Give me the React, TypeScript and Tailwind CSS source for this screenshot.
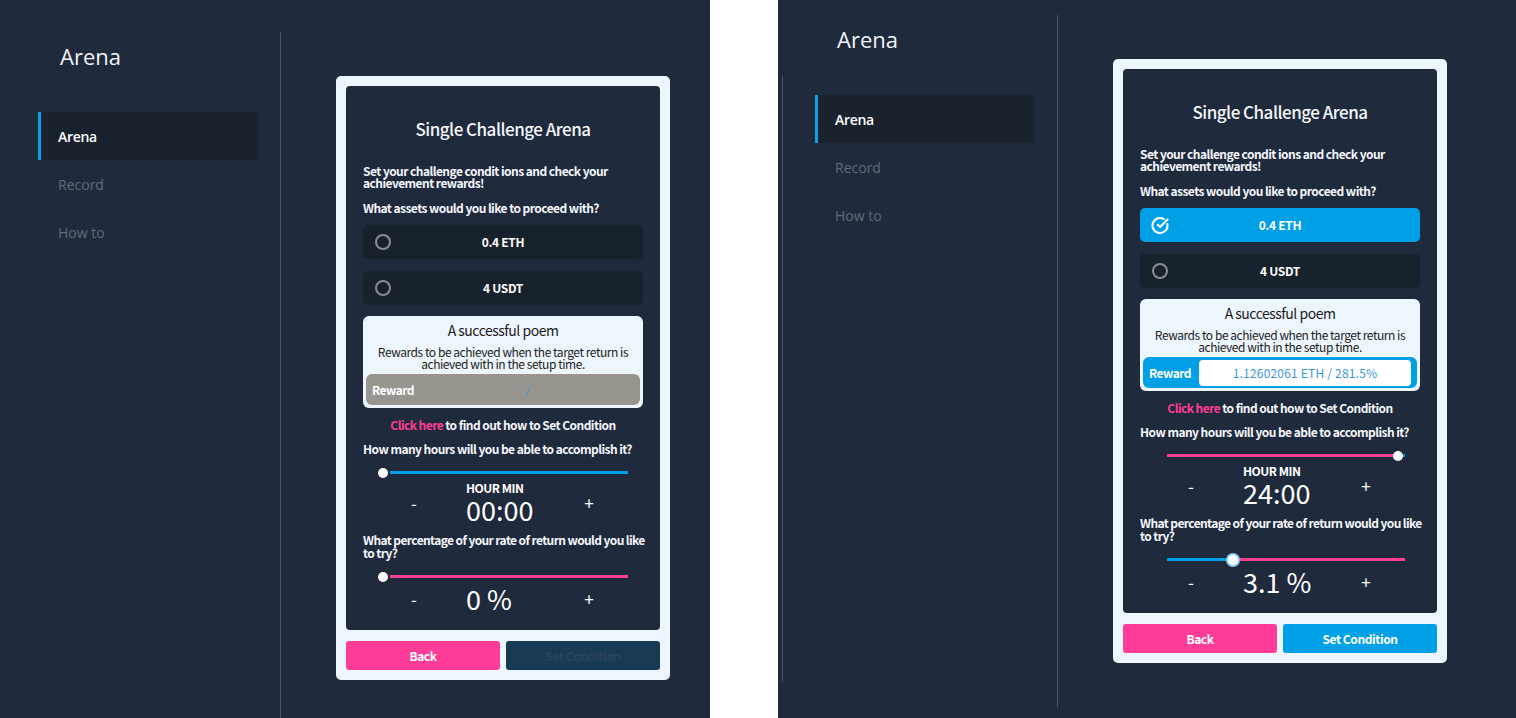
import React from 'react';
import { CircleCheckBig } from 'lucide-react';

const cardFont = { fontFamily: '"Noto Sans CJK KR", "Noto Sans", sans-serif' };

type PanelProps = {
  selected: boolean;
  timePct: number;
  time: string;
  ratePct: number;
  rate: string;
  reward: string;
  ready: boolean;
};

const Slider = ({ pct, fillClass, restClass, ring }: { pct: number; fillClass: string; restClass: string; ring?: boolean }) => {
  const fill = Math.max(0, pct * 238 - 7);
  return (
    <div className="relative ml-[15px] h-[14px] w-[250px]">
      <div className={`absolute left-[12px] top-[5px] h-[3px] w-[238px] ${restClass}`} />
      <div className={`absolute left-[12px] top-[5px] h-[3px] ${fillClass}`} style={{ width: fill }} />
      {ring ? (
        <div
          className="absolute top-0 h-[14px] w-[14px] rounded-full border-2 border-[#8fd0f4] bg-white"
          style={{ left: -2 + pct * 238 }}
        />
      ) : (
        <div className="absolute top-[2px] h-[10px] w-[10px] rounded-full bg-white" style={{ left: pct * 238 }} />
      )}
    </div>
  );
};

const Stepper = ({ label, value }: { label?: string; value: string }) => (
  <div className="flex items-center text-white">
    <span className="ml-[41px] w-[20px] text-center text-[17px]">-</span>
    <div className="ml-[42px] flex w-[113px] flex-col">
      {label && <span className="h-[12px] text-[12px] font-bold leading-[12px] tracking-[-0.5px]">{label}</span>}
      <span className={`${label ? 'mt-[2px]' : ''} h-[28px] text-[27px] leading-[28px]`}>{value}</span>
    </div>
    <span className="w-[20px] text-center text-[17px]">+</span>
  </div>
);

const Option = ({ label, on }: { label: string; on: boolean }) => (
  <div
    className={`relative flex h-[34px] w-[280px] items-center justify-center rounded-[5px] text-[12px] font-bold tracking-[-0.3px] text-white ${on ? 'bg-[#00a0e6]' : 'bg-[#18222d]'}`}
  >
    <span className="absolute left-[11px] flex h-[18px] w-[18px] items-center justify-center">
      {on ? (
        <CircleCheckBig className="h-[19px] w-[19px] text-white" strokeWidth={2.8} />
      ) : (
        <span className="block h-[16px] w-[16px] rounded-full border-2 border-[#8d8d8d]" />
      )}
    </span>
    {label}
  </div>
);

const Card = (p: PanelProps) => (
  <div className="w-[334px] rounded-[5px] bg-[#eef6fd] p-[10px]" style={cardFont}>
    <div className="flex h-[544px] flex-col rounded-[4px] bg-[#1f2a3c] px-[17px] pt-[31px] text-[#f3f6fa]">
      <h2 className="text-center text-[17px] font-medium leading-[24px] tracking-[-0.5px]">Single Challenge Arena</h2>
      <p className="mt-[24px] text-[12px] font-bold leading-[12px] tracking-[-0.55px]">
        Set your challenge condit ions and check your achievement rewards!
      </p>
      <p className="mt-[12px] text-[12px] font-bold leading-[14px] tracking-[-0.55px]">What assets would you like to proceed with?</p>
      <div className="mt-[10px]">
        <Option label="0.4 ETH" on={p.selected} />
      </div>
      <div className="mt-[12px]">
        <Option label="4 USDT" on={false} />
      </div>
      <div className="mt-[11px] flex h-[92px] w-[280px] flex-col rounded-[6px] bg-[#eef6fd] px-[3px] pt-[5px] text-center text-[#1b1b1b]">
        <span className="text-[14px] leading-[18px] tracking-[-0.5px]">A successful poem</span>
        <span className="mt-[7px] px-[8px] text-[12px] leading-[12px] tracking-[-0.45px]">
          Rewards to be achieved when the target return is achieved with in the setup time.
        </span>
        <div
          className={`mt-[4px] flex h-[31px] items-center rounded-[6px] ${p.selected ? 'bg-[#00a0e6]' : 'bg-[#98958f]'}`}
        >
          <span className="w-[56px] pl-[6px] text-left text-[12px] font-bold tracking-[-0.5px] text-white">Reward</span>
          <div
            className={`mr-[6px] flex h-[26px] flex-1 items-center justify-center rounded-[4px] text-[12px] tracking-[0.2px] text-[#3b97d8] ${p.selected ? 'bg-white' : ''}`}
          >
            {p.reward}
          </div>
        </div>
      </div>
      <p className="mt-[10px] text-center text-[12px] font-bold leading-[14px] tracking-[-0.55px]">
        <span className="text-[#ff3d94]">Click here</span> to find out how to Set Condition
      </p>
      <p className="mt-[10px] whitespace-nowrap text-[12px] font-bold leading-[14px] tracking-[-0.55px]">
        How many hours will you be able to accomplish it?
      </p>
      <div className="mt-[10px]">
        <Slider pct={p.timePct} fillClass="bg-[#ff3d94]" restClass="bg-[#00a0e6]" />
      </div>
      <div className="mt-[2px]">
        <Stepper label="HOUR MIN" value={p.time} />
      </div>
      <p className="mt-[9px] w-[288px] text-[12px] font-bold leading-[13px] tracking-[-0.6px]">
        What percentage of your rate of return would you like to try?
      </p>
      <div className="mt-[11px]">
        <Slider pct={p.ratePct} fillClass="bg-[#00a0e6]" restClass="bg-[#ff3d94]" ring={p.ratePct > 0} />
      </div>
      <div className="mt-[1px]">
        <Stepper value={p.rate} />
      </div>
    </div>
    <div className="mt-[11px] flex gap-[6px] text-[12px] font-bold tracking-[-0.4px]">
      <button className="h-[29px] w-[154px] rounded-[3px] bg-[#ff3d98] text-white">Back</button>
      <button
        className={`h-[29px] flex-1 rounded-[3px] ${p.ready ? 'bg-[#00a0e6] text-white' : 'bg-[#183a55] text-[#2b4259]'}`}
      >
        Set Condition
      </button>
    </div>
  </div>
);

const Screen = (p: PanelProps) => (
  <div className="flex" style={{ fontFamily: '"Open Sans", "Noto Sans", sans-serif' }}>
    <div className="h-[692px] w-[281px] shrink-0 border-r border-[#4c5563] pt-[9px]">
      <h1 className="pl-[60px] text-[22px] font-medium leading-[30px] text-[#f1f3f6]">Arena</h1>
      <nav className="mt-[41px] pl-[38px] text-[14px]">
        <div className="flex h-[48px] w-[220px] items-center border-l-[3px] border-[#0ea0e6] bg-[#19222d] pl-[17px] font-semibold tracking-[-0.3px] text-white">
          Arena
        </div>
        <div className="flex h-[48px] w-[220px] items-center pl-[20px] text-[#636b77]">Record</div>
        <div className="flex h-[48px] w-[220px] items-center pl-[20px] text-[#636b77]">How to</div>
      </nav>
    </div>
    <div className="pl-[55px] pt-[44px]">
      <Card {...p} />
    </div>
  </div>
);

export default function App() {
  return (
    <div className="flex h-[718px] w-[1516px] overflow-hidden bg-white">
      <div className="h-[718px] w-[710px] shrink-0 overflow-hidden bg-[#1f2a3c] pt-[32px]">
        <Screen selected={false} timePct={0} time="00:00" ratePct={0} rate="0 %" reward="/" ready={false} />
      </div>
      <div className="w-[68px] shrink-0 bg-white" />
      <div className="relative h-[718px] flex-1 overflow-hidden bg-[#1f2a3c] pt-[15px]">
        <div className="absolute left-[4px] top-[76px] h-[605px] w-px bg-[#4c5563]" />
        <div className="-ml-[1px]">
          <Screen
            selected
            timePct={1}
            time="24:00"
            ratePct={0.307}
            rate="3.1 %"
            reward="1.12602061 ETH / 281.5%"
            ready
          />
        </div>
      </div>
    </div>
  );
}
